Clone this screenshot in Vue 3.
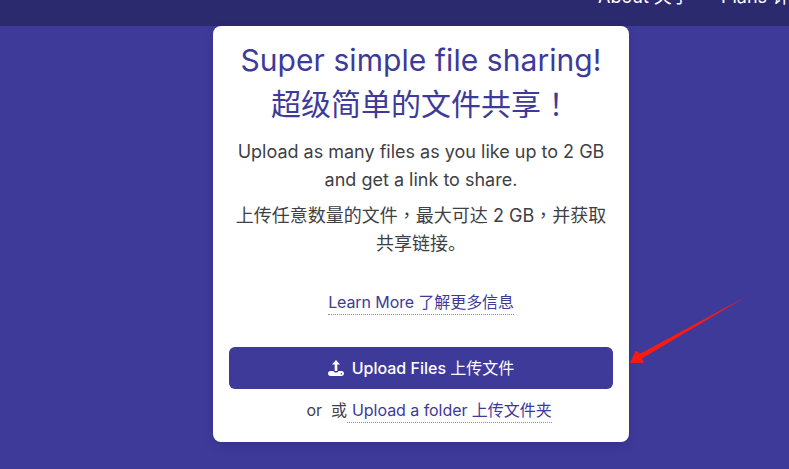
<script setup>
const navItems = ['About 关于', 'Plans 计划']
</script>

<template>
  <div class="page">
    <nav class="nav">
      <a v-for="item in navItems" :key="item" class="nav-link">{{ item }}</a>
    </nav>
    <main class="main">
      <section class="card">
        <h1 class="title">Super simple file sharing!</h1>
        <h1 class="title cn">超级简单的文件共享<span class="tc">！</span></h1>
        <p class="desc">Upload as many files as you like up to 2 GB and get a link to share.</p>
        <p class="desc cn-desc">上传任意数量的文件<span class="tc">，</span>最大可达 2 GB<span class="tc">，</span>并获取共享链接。</p>
        <a class="learn link">Learn More 了解更多信息</a>
        <button class="upload">
          <svg class="icon" viewBox="0 0 16 16" width="16" height="16" aria-hidden="true">
            <path fill="#fff" d="M8 0 12 4.6H9.3V11H6.7V4.6H4Z" />
            <path fill="#fff" d="M2.4 11H5.5c.4 1 1.3 1.5 2.5 1.5s2.100-.5 2.500-1.500h3.100c1.300 0 2.400 1.100 2.400 2.500S14.900 16 13.600 16H2.400C1.100 16 0 14.900 0 13.500S1.100 11 2.400 11Z" />
            <circle cx="13.400" cy="13.700" r=".8" fill="#3e3a9a" />
          </svg>
          <span>Upload Files <span class="cjk">上传文件</span></span>
        </button>
        <div class="alt">
          <span class="or">or&nbsp; 或</span>
          <a class="link folder">Upload a folder 上传文件夹</a>
        </div>
      </section>
    </main>
    <svg class="arrow" viewBox="0 0 789 469" width="789" height="469" aria-hidden="true">
      <path fill="#fb1a10" d="M748 295.500 640.500 353.500 635.700 350.700 630 363 644 362.800 641.800 358.500Z" />
    </svg>
  </div>
</template>

<style>
html, body { margin: 0; background: #3e3a9a; }
</style>

<style scoped>
.page {
  position: relative;
  width: 789px;
  height: 469px;
  overflow: hidden;
  background: #3e3a9a;
  font-family: Inter, "Noto Sans CJK SC", sans-serif;
  color: #3f3f46;
}
.nav {
  height: 26px;
  box-sizing: border-box;
  background: #2c2a6e;
  display: flex;
  justify-content: flex-end;
  align-items: flex-end;
  gap: 38px;
  padding: 0 0 17px 0;
  margin-right: -36px;
  overflow: hidden;
}
.nav-link {
  color: #fff;
  font-size: 18px;
  line-height: 24px;
  width: 104px;
  flex: none;
  white-space: nowrap;
}
.nav-link:first-child { width: 85px; }
.main { display: flex; padding-left: 213px; }
.card {
  width: 416px;
  height: 416px;
  box-sizing: border-box;
  background: #fff;
  border-radius: 8px;
  padding: 16px 16px 0;
  display: flex;
  flex-direction: column;
  align-items: center;
  box-shadow: 0 4px 10px rgba(0, 0, 0, .12);
}
.title {
  margin: 0;
  font-size: 30px;
  line-height: 36px;
  font-weight: 400;
  color: #3e3a9a;
  white-space: nowrap;
  letter-spacing: .07px;
}
.title.cn { margin-top: 8px; letter-spacing: 0; }
.tc { font-family: "Noto Sans CJK TC", sans-serif; line-height: 0; }
.desc {
  margin: 16px 0 0;
  width: 376px;
  text-align: center;
  font-size: 18px;
  line-height: 28px;
}
.cn-desc { margin-top: 8px; }
.link {
  color: #3e3a9a;
  border-bottom: 1px dotted #8b8b9b;
  white-space: nowrap;
}
.learn {
  margin-top: 32px;
  font-size: 16px;
  line-height: 24px;
  letter-spacing: -.1px;
}
.upload {
  margin-top: 32px;
  width: 384px;
  height: 42px;
  border: 0;
  border-radius: 6px;
  background: #3e3a9a;
  color: #fff;
  font: 500 16px/24px Inter, "Noto Sans CJK SC", sans-serif;
  display: flex;
  align-items: center;
  justify-content: center;
  gap: 8px;
  flex: none;
}
.cjk { font-weight: 400; }
.icon { flex: none; }
.alt {
  margin-top: 9px;
  padding-left: 16px;
  font-size: 16px;
  line-height: 24px;
  display: flex;
}
.folder { padding-left: 5px; letter-spacing: -.05px; }
.arrow { position: absolute; left: 0; top: 0; pointer-events: none; }
</style>
